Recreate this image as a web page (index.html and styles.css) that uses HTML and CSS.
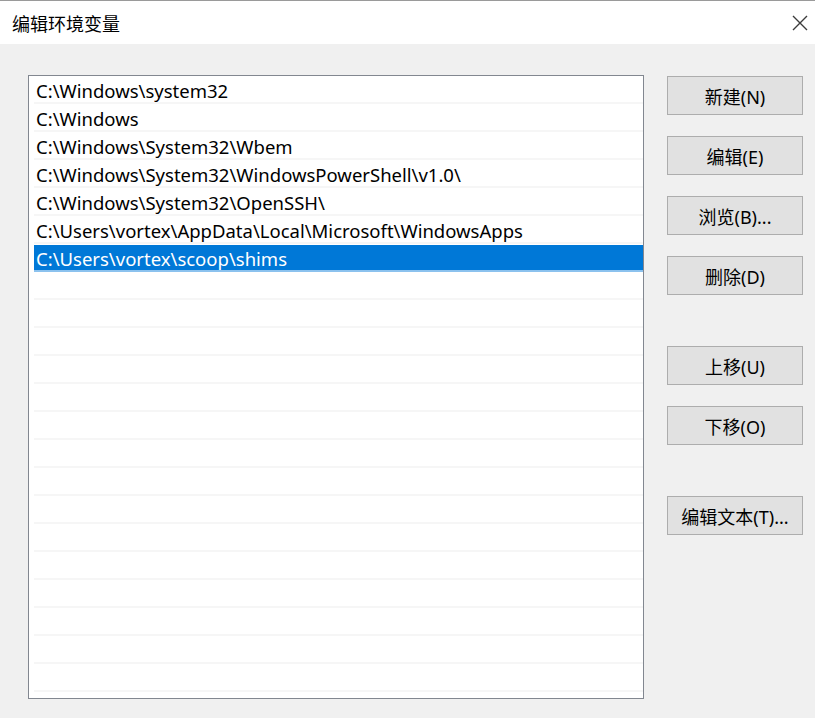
FILE: index.html
```html
<!DOCTYPE html>
<html lang="zh-CN">
<head>
    <meta charset="UTF-8">
    <title>编辑环境变量</title>
    <link rel="stylesheet" href="styles.css">
</head>
<body>
    <div class="titlebar">
        <span class="title">编辑环境变量</span>
        <button class="close" aria-label="关闭">
            <svg width="16" height="16" viewBox="0 0 16 16">
                <path d="M1 1 L15 15 M15 1 L1 15" stroke="#3c3c3c" stroke-width="1.4" fill="none"/>
            </svg>
        </button>
    </div>

    <div class="content">
        <!-- Liste des chemins -->
        <div class="list">
            <div class="row">C:\Windows\system32</div>
            <div class="row">C:\Windows</div>
            <div class="row">C:\Windows\System32\Wbem</div>
            <div class="row">C:\Windows\System32\WindowsPowerShell\v1.0\</div>
            <div class="row">C:\Windows\System32\OpenSSH\</div>
            <div class="row">C:\Users\vortex\AppData\Local\Microsoft\WindowsApps</div>
            <div class="row selected">C:\Users\vortex\scoop\shims</div>
            <div class="row"></div>
            <div class="row"></div>
            <div class="row"></div>
            <div class="row"></div>
            <div class="row"></div>
            <div class="row"></div>
            <div class="row"></div>
            <div class="row"></div>
            <div class="row"></div>
            <div class="row"></div>
            <div class="row"></div>
            <div class="row"></div>
            <div class="row"></div>
            <div class="row"></div>
            <div class="row"></div>
        </div>

        <!-- Boutons -->
        <div class="buttons">
            <div class="group">
                <button class="btn">新建(N)</button>
                <button class="btn">编辑(E)</button>
                <button class="btn">浏览(B)...</button>
                <button class="btn">删除(D)</button>
            </div>
            <div class="group">
                <button class="btn">上移(U)</button>
                <button class="btn">下移(O)</button>
            </div>
            <div class="group">
                <button class="btn">编辑文本(T)...</button>
            </div>
        </div>
    </div>
</body>
</html>
```

FILE: styles.css
```css
/* Style général */
body {
    margin: 0;
    padding: 0;
    background-color: #f0f0f0;
    color: #000;
    font-family: "Noto Sans", "Noto Sans CJK SC", sans-serif;
    font-size: 18px;
}

.titlebar {
    height: 43px;
    background-color: #fff;
    border-top: 1px solid #9a9a9a;
    display: flex;
    align-items: center;
    justify-content: space-between;
    padding: 0 7px 0 12px;
}

.title {
    font-family: "Noto Sans CJK SC", sans-serif;
    font-size: 18px;
    color: #000;
}

.close {
    border: none;
    background: none;
    padding: 0;
    width: 16px;
    height: 16px;
    display: flex;
}

.content {
    display: flex;
    align-items: flex-start;
    padding: 31px 0 0 28px;
    gap: 23px;
}

.list {
    width: 609px;
    height: 622px;
    padding-left: 5px;
    background-color: #fff;
    border: 1px solid #828790;
    overflow: hidden;
    font-size: 18.5px;
}

.row {
    height: 24px;
    line-height: 26px;
    padding: 2px 0 0 2px;
    border-bottom: 2px solid #f6f6f6;
    white-space: nowrap;
}

.row.selected {
    background-color: #0078d7;
    color: #fff;
    border-top: 1px solid #fff;
    padding-top: 1px;
    border-bottom-color: #8cc2ee;
}

.buttons {
    display: flex;
    flex-direction: column;
    gap: 51px;
    margin-top: 1px;
}

.group {
    display: flex;
    flex-direction: column;
    gap: 21px;
}

.btn {
    width: 136px;
    height: 39px;
    background-color: #e1e1e1;
    border: 1px solid #adadad;
    font-family: "Noto Sans", "Noto Sans CJK SC", sans-serif;
    font-size: 18px;
    color: #000;
    padding: 0;
}
```
